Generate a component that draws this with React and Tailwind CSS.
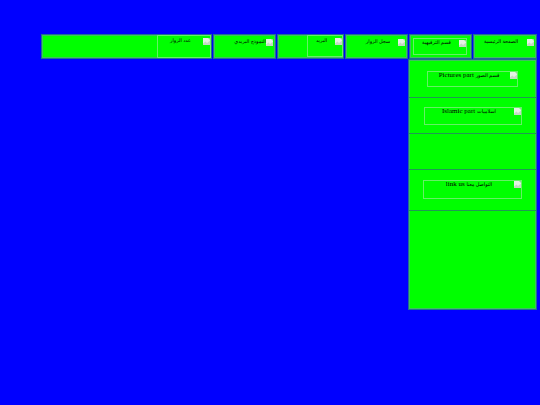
const ICON = () => (
  <svg width="7" height="7" viewBox="0 0 7 7" className="shrink-0">
    <rect x="0" y="0" width="7" height="7" fill="#e4f2e4" />
    <path d="M0 5.5 L2.5 3.5 L4 5 L7 2.5 L7 7 L0 7 Z" fill="#c4d8c4" />
    <path d="M5 0 L7 0 L7 2 Z" fill="#8fd88f" />
  </svg>
);

const font = "font-['Liberation_Serif','DejaVu_Sans',serif]";

function Box({ className, text, latin, textClass = "text-center" }) {
  return (
    <div dir="rtl" className={`flex items-start border border-[#66f066] ${className}`}>
      <ICON />
      <span className={`flex-1 whitespace-nowrap text-black text-[5px] leading-[6px] ${font} ${textClass}`}>
        {text}
        {latin ? <span className="text-[7px]"> {latin}</span> : null}
      </span>
    </div>
  );
}

function Cell({ className, children }) {
  return (
    <div dir="rtl" className={`h-[25px] flex items-start bg-[#00ff00] border border-[#1f6f8f] shadow-[inset_0_0_0_1px_#3fc060] ${className}`}>
      {children}
    </div>
  );
}

function Row({ className, children }) {
  return (
    <div className={`flex justify-center items-start border-b border-[#1f9a55] ${className}`}>{children}</div>
  );
}

export default function App() {
  return (
    <div className="min-h-[405px] bg-[#0000ff] pt-[34px] pl-[41px] w-[540px] overflow-hidden">
      <div dir="rtl" className="flex w-[496px] gap-px">
        <Cell className="w-[64px]">
          <Box className="w-[62px] h-[22px] mt-px pt-[2px] pr-px border-transparent" text="الصفحة الرئيسية" />
        </Cell>
        <Cell className="w-[63px]">
          <Box className="w-[54px] h-[17px] mt-[3px] mr-[4px] pt-px" text="قسم الترفيهية" />
        </Cell>
        <Cell className="w-[63px]">
          <Box className="w-[50px] h-[22px] pt-[3px] pr-px border-transparent" text="سجل الزوار" />
        </Cell>
        <Cell className="w-[67px]">
          <Box className="w-[36px] h-[22px] pt-[2px]" text="البريد" />
        </Cell>
        <Cell className="w-[63px]">
          <Box className="w-[62px] h-[20px] mt-[3px] pr-[1px] border-transparent" text="النموذج البريدي" textClass="text-start text-[5.5px]" />
        </Cell>
        <Cell className="w-[171px]">
          <Box className="w-[54px] h-[23px] pt-[2px]" text="عدد الزوار" />
        </Cell>
      </div>
      <div className="ml-[367px] w-[129px] h-[251px] bg-[#00ff00] border border-[#1f6f8f] shadow-[inset_0_0_0_1px_#3fc060] flex flex-col">
        <Row className="h-[38px] pt-[11px]">
          <Box className="w-[91px] h-[16px]" text="قسم الصور" latin="Pictures part" />
        </Row>
        <Row className="h-[36px] pt-[9px]">
          <Box className="w-[98px] h-[18px]" text="اسلاميات" latin="Islamic part" />
        </Row>
        <Row className="h-[36px]" />
        <Row className="h-[41px] pt-[10px]">
          <Box className="w-[99px] h-[19px]" text="التواصل معنا" latin="link us" />
        </Row>
      </div>
    </div>
  );
}
